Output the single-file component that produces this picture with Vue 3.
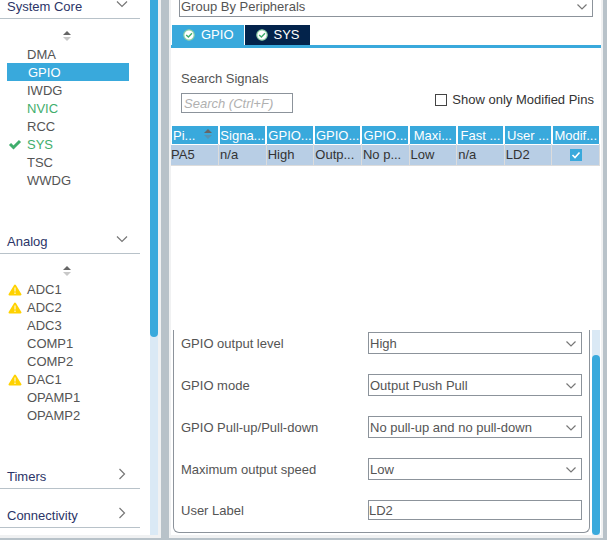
<script setup>
import { ref } from 'vue'

const sections = [
  {
    name: 'System Core',
    open: true,
    items: [
      { name: 'DMA' },
      { name: 'GPIO', selected: true },
      { name: 'IWDG' },
      { name: 'NVIC', active: true },
      { name: 'RCC' },
      { name: 'SYS', active: true, icon: 'check' },
      { name: 'TSC' },
      { name: 'WWDG' },
    ],
  },
  {
    name: 'Analog',
    open: true,
    items: [
      { name: 'ADC1', icon: 'warning' },
      { name: 'ADC2', icon: 'warning' },
      { name: 'ADC3' },
      { name: 'COMP1' },
      { name: 'COMP2' },
      { name: 'DAC1', icon: 'warning' },
      { name: 'OPAMP1' },
      { name: 'OPAMP2' },
    ],
  },
  { name: 'Timers', open: false, items: [] },
  { name: 'Connectivity', open: false, items: [] },
]

const tabs = ['GPIO', 'SYS']
const activeTab = ref('GPIO')

const columns = ['Pi...', 'Signa...', 'GPIO...', 'GPIO...', 'GPIO...', 'Maxi...', 'Fast ...', 'User ...', 'Modif...']
const cells = ['PA5', 'n/a', 'High', 'Outp...', 'No p...', 'Low', 'n/a', 'LD2']

const settings = [
  { id: 'level', label: 'GPIO output level', value: 'High' },
  { id: 'mode', label: 'GPIO mode', value: 'Output Push Pull' },
  { id: 'pull', label: 'GPIO Pull-up/Pull-down', value: 'No pull-up and no pull-down' },
  { id: 'speed', label: 'Maximum output speed', value: 'Low' },
]
const userLabel = ref('LD2')
const onlyModified = ref(false)
const modified = ref(true)
</script>

<template>
  <div class="page">
    <aside class="sidebar">
      <nav class="categories">
        <section v-for="s in sections" :key="s.name">
          <button class="category" type="button" :aria-expanded="s.open">
            <span>{{ s.name }}</span>
            <svg v-if="s.open" class="fold" width="12" height="12" viewBox="0 0 12 12"><path d="M1 3.5 L6 8.5 L11 3.5" /></svg>
            <svg v-else class="fold" width="12" height="12" viewBox="0 0 12 12"><path d="M3.5 1 L8.5 6 L3.5 11" /></svg>
          </button>
          <div v-if="s.open" class="group">
            <div class="sort">
              <svg width="8" height="10" viewBox="0 0 8 10">
                <path d="M0 4 L4 0 L8 4 Z" fill="#666" />
                <path d="M0 6 L4 10 L8 6 Z" fill="#c8c8c8" />
              </svg>
            </div>
            <ul>
              <li v-for="i in s.items" :key="i.name">
                <a href="#" class="item" :class="{ selected: i.selected, active: i.active }">
                  <span class="mark">
                    <svg v-if="i.icon === 'check'" width="14" height="12" viewBox="0 0 14 12">
                      <path d="M2 5 L5.5 8.5 L12 2" fill="none" stroke="#3fae6c" stroke-width="3" />
                    </svg>
                    <svg v-if="i.icon === 'warning'" width="14" height="12" viewBox="0 0 14 12">
                      <path d="M7 1.5 L12.5 10.5 H1.5 Z" fill="#ffd200" stroke="#ffd200" stroke-width="2" stroke-linejoin="round" />
                      <path d="M7 3.5 V7.5 M7 8.5 V10" stroke="#fff" stroke-width="1" />
                    </svg>
                  </span>
                  <span>{{ i.name }}</span>
                </a>
              </li>
            </ul>
          </div>
        </section>
      </nav>
      <div class="track side-track"><div class="thumb side-thumb"></div></div>
    </aside>

    <main class="panel">
      <div class="picker grouping">
        <select aria-label="Grouping"><option>Group By Peripherals</option></select>
        <svg class="chevron" width="10" height="6" viewBox="0 0 10 6"><path d="M0.5 0.5 L5 5 L9.5 0.5" /></svg>
      </div>

      <div class="tabs" role="tablist">
        <button
          v-for="t in tabs"
          :key="t"
          class="tab"
          :class="{ current: t === activeTab }"
          role="tab"
          type="button"
          :aria-selected="t === activeTab"
          @click="activeTab = t"
        >
          <svg width="12" height="12" viewBox="0 0 12 12">
            <circle cx="6" cy="6" r="5.2" fill="#fff" stroke="#8ccfa5" stroke-width="1.2" />
            <path d="M3.2 6 L5.4 8 L9 4.3" fill="none" stroke="#3fae6c" stroke-width="1.4" />
          </svg>
          <span>{{ t }}</span>
        </button>
      </div>

      <div class="body">
        <div class="filters">
          <div class="search">
            <label for="search">Search Signals</label>
            <input id="search" type="text" placeholder="Search (Ctrl+F)" />
          </div>
          <label class="only">
            <input v-model="onlyModified" type="checkbox" class="box" />
            <span>Show only Modified Pins</span>
          </label>
        </div>

        <table>
          <thead>
            <tr>
              <th v-for="(c, n) in columns" :key="n" scope="col">
                <div class="head" :class="{ sorted: n === 0 }">
                  <span>{{ c }}</span>
                  <svg v-if="n === 0" width="8" height="10" viewBox="0 0 8 10">
                    <path d="M0 4 L4 0 L8 4 Z" fill="#666" />
                    <path d="M0 6 L4 10 L8 6 Z" fill="#5593b3" />
                  </svg>
                </div>
              </th>
            </tr>
          </thead>
          <tbody>
            <tr>
              <td v-for="(c, n) in cells" :key="n">{{ c }}</td>
              <td>
                <label class="tick">
                  <input v-model="modified" type="checkbox" aria-label="Modified" />
                  <svg v-if="modified" width="12" height="12" viewBox="0 0 12 12"><path d="M2.5 6 L5 8.5 L9.5 3.5" /></svg>
                </label>
              </td>
            </tr>
          </tbody>
        </table>

        <div class="settings">
          <form class="form" @submit.prevent>
            <div v-for="f in settings" :key="f.id" class="field">
              <label :for="f.id">{{ f.label }}</label>
              <div class="picker">
                <select :id="f.id"><option>{{ f.value }}</option></select>
                <svg class="chevron" width="10" height="6" viewBox="0 0 10 6"><path d="M0.5 0.5 L5 5 L9.5 0.5" /></svg>
              </div>
            </div>
            <div class="field">
              <label for="user">User Label</label>
              <input id="user" v-model="userLabel" type="text" />
            </div>
          </form>
          <div class="track form-track"><div class="thumb form-thumb"></div></div>
        </div>
      </div>
    </main>
  </div>
</template>

<style>
body {
  background: #b8c2c9;
}
</style>

<style scoped>
.page,
.page * {
  box-sizing: border-box;
}
.page {
  display: flex;
  gap: 8px;
  min-height: 100vh;
  padding: 0 4px 2px 0;
  overflow: hidden;
  background: #b8c2c9;
  color: #545454;
  font-family: "Liberation Sans", Arial, sans-serif;
  font-size: 13px;
  line-height: 16px;
}
button,
input,
select {
  margin: 0;
  border: 0;
  padding: 0;
  color: inherit;
  font: inherit;
}
.sidebar {
  display: flex;
  flex: none;
  width: 161px;
  border: solid #f0f1f2;
  border-width: 0 3px 3px 0;
  background: #fff;
}
.categories {
  flex: 1;
  margin-top: -20px;
  padding: 0 10px 7px 0;
}
.category {
  display: flex;
  align-items: flex-end;
  justify-content: space-between;
  width: 100%;
  height: 39px;
  padding: 0 12px 3px 7px;
  border-bottom: 1px solid #b8c2c9;
  background: none;
  color: #2b3467;
  text-align: left;
}
.fold {
  margin-bottom: 5px;
  fill: none;
  stroke: #777;
  stroke-width: 1.2;
}
.group {
  padding: 0 11px 26px 7px;
}
.sort {
  display: flex;
  align-items: center;
  height: 26px;
  padding: 8px 0 0 56px;
}
ul {
  margin: 0;
  padding: 0;
  list-style: none;
}
.item {
  display: flex;
  align-items: center;
  height: 18px;
  padding-top: 2px;
  color: #545454;
  text-decoration: none;
}
.mark {
  display: flex;
  width: 20px;
  padding-left: 1px;
}
.item.active {
  color: #3fae6c;
}
.item.selected {
  padding-left: 1px;
  background: #39a9dc;
  color: #fff;
}
.track {
  flex: none;
  width: 8px;
  background: #dae9f5;
}
.thumb {
  background: #39a9dc;
}
.side-thumb {
  height: 63%;
  border-radius: 0 0 4px 4px;
}
.panel {
  display: flex;
  flex: 1;
  flex-direction: column;
  min-width: 0;
  border: solid #f0f1f2;
  border-width: 0 2px 3px 2px;
  background: #fff;
}
.picker {
  position: relative;
}
.picker select {
  display: block;
  width: 100%;
  height: 22px;
  padding: 1px 20px 0 1px;
  border: 1px solid #8c939b;
  border-radius: 0;
  background: #fff;
  appearance: none;
}
.chevron {
  position: absolute;
  top: 9px;
  right: 6px;
  fill: none;
  stroke: #777;
  stroke-width: 1.2;
  pointer-events: none;
}
.grouping {
  margin: -5px 8px 8px;
}
.tabs {
  display: flex;
  gap: 1px;
  padding-left: 1px;
  border-bottom: 3px solid #39a9dc;
}
.tab {
  display: flex;
  align-items: center;
  gap: 6px;
  height: 20px;
  padding: 0 10px 1px 11px;
  background: #03234b;
  color: #fff;
}
.tab.current {
  background: #39a9dc;
}
.body {
  display: flex;
  flex: 1;
  flex-direction: column;
  padding-right: 1px;
}
.filters {
  display: flex;
  align-items: flex-end;
  justify-content: space-between;
  padding: 23px 6px 13px 10px;
}
.search {
  display: flex;
  flex-direction: column;
  gap: 6px;
}
.search input {
  width: 112px;
  height: 20px;
  padding: 0 2px;
  border: 1px solid #8c939b;
}
.search input::placeholder {
  color: #b0b0b0;
  font-style: italic;
  opacity: 1;
}
.only {
  display: flex;
  align-items: center;
  gap: 5px;
  padding-bottom: 5px;
  color: #333;
}
.box {
  width: 12px;
  height: 12px;
  border: 1px solid #444;
  background: #fff;
  appearance: none;
}
table {
  width: 100%;
  border-collapse: collapse;
  table-layout: fixed;
}
th,
td {
  padding: 0;
  overflow: hidden;
  font-weight: normal;
  white-space: nowrap;
}
th {
  padding: 0 1px;
}
.head {
  display: flex;
  justify-content: center;
  height: 18px;
  overflow: hidden;
  background: #39a9dc;
  color: #fff;
  line-height: 20px;
}
.sorted {
  justify-content: space-between;
  padding: 0 6px 0 1px;
}
.sorted svg {
  margin-top: 3px;
}
td {
  height: 21px;
  border: solid #dcdcdc;
  border-width: 1px 1px 1px 0;
  border-top-color: #fff;
  background: #b8cee5;
  color: #333;
}
td + td {
  padding-left: 1px;
}
.tick {
  display: grid;
  justify-content: center;
}
.tick input,
.tick svg {
  grid-area: 1 / 1;
}
.tick input {
  width: 12px;
  height: 12px;
  background: #fff;
  appearance: none;
}
.tick input:checked {
  background: #39a9dc;
}
.tick path {
  fill: none;
  stroke: #fff;
  stroke-width: 1.6;
}
.settings {
  display: flex;
  margin-top: auto;
}
.form {
  display: flex;
  flex: 1;
  flex-direction: column;
  gap: 20px;
  margin: 0 2px 2px;
  padding: 2px 7px 12px;
  border: 1px solid #8c939b;
  border-top: 0;
  border-radius: 0 0 6px 6px;
}
.field {
  display: grid;
  grid-template-columns: 187px 1fr;
  align-items: center;
}
.field label {
  padding-top: 2px;
}
.field input {
  height: 20px;
  min-width: 0;
  border: 1px solid #8c939b;
}
.form-track {
  padding-top: 25px;
}
.form-thumb {
  height: 100%;
  border-radius: 4px;
}
</style>
